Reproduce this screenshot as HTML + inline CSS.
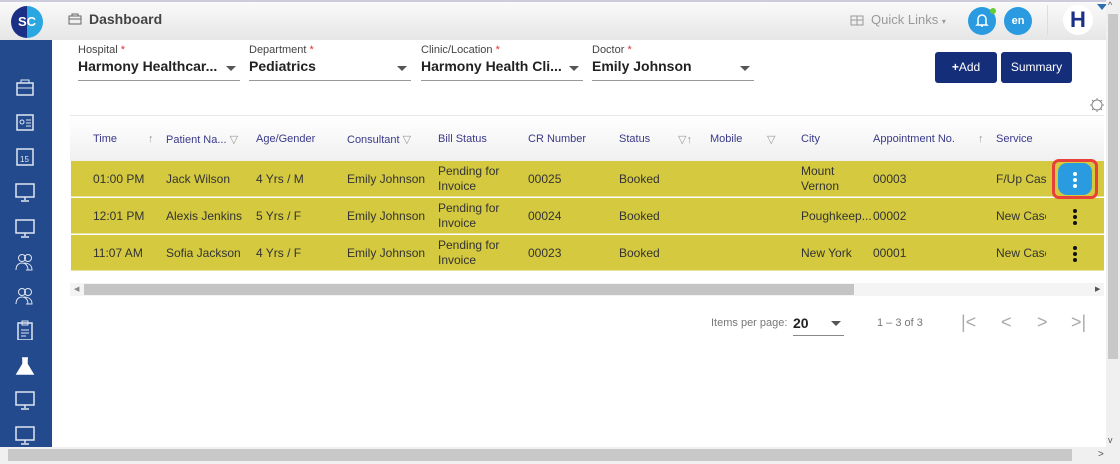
<!DOCTYPE html>
<html><head><style>
*{box-sizing:border-box;margin:0;padding:0}
body{width:1120px;height:464px;overflow:hidden;font-family:"Liberation Sans",sans-serif;background:#fff;position:relative;font-size:12px;color:#333}
.abs{position:absolute}
.hdr{left:0;top:0;width:1106px;height:40px;background:linear-gradient(#fafafa,#e6e6e6);border-top:2px solid #ccd}
.side{left:0;top:40px;width:52px;height:407px;background:#224a8c}
.ic{position:absolute;left:14px;width:22px;height:20px}
.lbl{font-size:11px;color:#444}
.lbl b{color:#d33;font-weight:normal}
.val{font-size:14px;font-weight:bold;color:#222;margin-top:2px}
.sel{position:absolute;top:44px;height:37px;border-bottom:1px solid #999}
.caret{position:absolute;right:4px;top:22px;border:5px solid transparent;border-top:5px solid #555}
.btn{position:absolute;top:52px;height:31px;background:#142e7a;color:#fff;font-size:12px;border-radius:3px;text-align:center;line-height:30px}
.th{position:absolute;top:133px;font-size:11px;color:#3a3a8a}
.row{position:absolute;left:71px;width:1033px;height:36px;background:#d4c93f;border-bottom:1px solid #e8e3a0}
.c{position:absolute;font-size:12px;color:#333;line-height:15px}
.dots{position:absolute;width:4px}
.dots i{display:block;width:4px;height:4px;border-radius:2px;background:#111;margin-bottom:2px}
</style></head><body>
<div class="abs hdr"></div>
<div class="abs" style="left:11px;top:6px;width:32px;height:32px;border-radius:50%;background:linear-gradient(90deg,#1b2f86 50%,#2aa6e0 50%);color:#fff;font-weight:bold;font-size:13px;text-align:center;line-height:32px">SC</div>
<svg class="abs" style="left:68px;top:13px" width="14" height="12"><rect x="1" y="3" width="12" height="8" fill="none" stroke="#666"/><rect x="4" y="1" width="6" height="2" fill="none" stroke="#666"/><line x1="1" y1="6" x2="13" y2="6" stroke="#666"/></svg>
<div class="abs" style="left:89px;top:11px;font-size:14px;font-weight:bold;color:#444">Dashboard</div>
<svg class="abs" style="left:850px;top:12px" width="14" height="14"><rect x="1" y="4" width="12" height="9" fill="none" stroke="#999"/><line x1="1" y1="8" x2="13" y2="8" stroke="#999"/><line x1="7" y1="4" x2="7" y2="13" stroke="#999"/></svg>
<div class="abs" style="left:871px;top:12px;font-size:13px;color:#999">Quick Links <span style="font-size:8px">▾</span></div>
<div class="abs" style="left:968px;top:7px;width:28px;height:28px;border-radius:50%;background:#2a9be0"></div>
<svg class="abs" style="left:975px;top:13px" width="14" height="16"><path d="M3 11V6a4 4 0 0 1 8 0v5l1 1H2z M6 13h2" fill="none" stroke="#fff" stroke-width="1.5"/></svg>
<div class="abs" style="left:990px;top:8px;width:6px;height:6px;border-radius:50%;background:#6c3"></div>
<div class="abs" style="left:1004px;top:7px;width:28px;height:28px;border-radius:50%;background:#2a9be0;color:#fff;font-size:11px;font-weight:bold;text-align:center;line-height:28px">en</div>
<div class="abs" style="left:1047px;top:5px;width:1px;height:30px;background:#ddd"></div>
<div class="abs" style="left:1063px;top:5px;width:30px;height:30px;border-radius:50%;background:#fff;color:#1b2f86;font-size:22px;font-weight:bold;text-align:center;line-height:30px">H</div>
<div class="abs" style="left:1097px;top:4px;border:5px solid transparent;border-top:6px solid #2a6fb0"></div>

<div class="abs side">
<svg class="ic" style="top:38px"><rect x="3" y="5" width="16" height="12" fill="none" stroke="#dfe6f2" stroke-width="1.5"/><rect x="7" y="2" width="8" height="3" fill="none" stroke="#dfe6f2"/><line x1="3" y1="10" x2="19" y2="10" stroke="#dfe6f2"/></svg>
<svg class="ic" style="top:72px"><rect x="3" y="3" width="16" height="15" fill="none" stroke="#dfe6f2" stroke-width="1.5"/><circle cx="8" cy="10" r="2" fill="none" stroke="#dfe6f2"/><path d="M12 8h5M12 11h5M12 14h5" stroke="#dfe6f2"/></svg>
<svg class="ic" style="top:106px"><rect x="3" y="3" width="16" height="16" fill="none" stroke="#dfe6f2" stroke-width="1.5"/><text x="6" y="16" font-size="8" fill="#dfe6f2" font-family="Liberation Sans">15</text></svg>
<svg class="ic" style="top:142px"><rect x="2" y="2" width="18" height="13" fill="none" stroke="#dfe6f2" stroke-width="1.5"/><path d="M11 15v3M7 19h8" stroke="#dfe6f2" stroke-width="1.5"/></svg>
<svg class="ic" style="top:178px"><rect x="2" y="2" width="18" height="13" fill="none" stroke="#dfe6f2" stroke-width="1.5"/><path d="M11 15v3M7 19h8" stroke="#dfe6f2" stroke-width="1.5"/></svg>
<svg class="ic" style="top:212px"><circle cx="8" cy="6" r="3.5" fill="none" stroke="#dfe6f2"/><circle cx="14" cy="6" r="3.5" fill="none" stroke="#dfe6f2"/><path d="M2 18c0-5 3-7 6-7s6 2 6 7M10 11c3 0 8 1 8 7h-6" fill="none" stroke="#dfe6f2"/></svg>
<svg class="ic" style="top:246px"><circle cx="8" cy="6" r="3.5" fill="none" stroke="#dfe6f2"/><circle cx="14" cy="6" r="3.5" fill="none" stroke="#dfe6f2"/><path d="M2 18c0-5 3-7 6-7s6 2 6 7M10 11c3 0 8 1 8 7h-6" fill="none" stroke="#dfe6f2"/></svg>
<svg class="ic" style="top:280px"><rect x="4" y="3" width="14" height="17" fill="none" stroke="#dfe6f2" stroke-width="1.5"/><rect x="8" y="1" width="6" height="4" fill="none" stroke="#dfe6f2"/><path d="M7 10h8M7 13h8M7 16h5" stroke="#dfe6f2"/></svg>
<svg class="ic" style="top:316px"><path d="M8 2h6M9 2v6L3 18h16L13 8V2" fill="#fff" stroke="#fff" stroke-width="1.5"/></svg>
<svg class="ic" style="top:350px"><rect x="2" y="2" width="18" height="13" fill="none" stroke="#dfe6f2" stroke-width="1.5"/><path d="M11 15v3M7 19h8" stroke="#dfe6f2" stroke-width="1.5"/></svg>
<svg class="ic" style="top:385px"><rect x="2" y="2" width="18" height="13" fill="none" stroke="#dfe6f2" stroke-width="1.5"/><path d="M11 15v3M7 19h8" stroke="#dfe6f2" stroke-width="1.5"/></svg>
</div>

<div class="sel" style="left:78px;width:162px"><div class="lbl">Hospital <b>*</b></div><div class="val">Harmony Healthcar...</div><div class="caret"></div></div>
<div class="sel" style="left:249px;width:162px"><div class="lbl">Department <b>*</b></div><div class="val">Pediatrics</div><div class="caret"></div></div>
<div class="sel" style="left:421px;width:162px"><div class="lbl">Clinic/Location <b>*</b></div><div class="val">Harmony Health Cli...</div><div class="caret"></div></div>
<div class="sel" style="left:592px;width:162px"><div class="lbl">Doctor <b>*</b></div><div class="val">Emily Johnson</div><div class="caret"></div></div>
<div class="btn" style="left:935px;width:62px"><b>+</b>Add</div>
<div class="btn" style="left:1001px;width:71px">Summary</div>
<svg class="abs" style="left:1089px;top:97px" width="16" height="16"><circle cx="8" cy="8" r="5" fill="none" stroke="#888"/><path d="M8 1v2M8 13v2M1 8h2M13 8h2M3 3l1.5 1.5M11.5 11.5L13 13M3 13l1.5-1.5M11.5 4.5L13 3" stroke="#888"/></svg>

<div class="abs" style="left:70px;top:115px;width:1034px;height:46px;background:linear-gradient(#fff,#f0f0f0);border-top:1px solid #e8e8e8"></div>
<div class="th" style="left:93px">Time</div>
<div class="th" style="left:148px;color:#999">↑</div>
<div class="th" style="left:166px">Patient Na... <span style="color:#999">▽</span></div>
<div class="th" style="left:256px">Age/Gender</div>
<div class="th" style="left:347px">Consultant <span style="color:#999">▽</span></div>
<div class="th" style="left:438px">Bill Status</div>
<div class="th" style="left:528px">CR Number</div>
<div class="th" style="left:619px">Status</div>
<div class="th" style="left:678px;color:#999">▽↑</div>
<div class="th" style="left:710px">Mobile</div>
<div class="th" style="left:767px;color:#999">▽</div>
<div class="th" style="left:801px">City</div>
<div class="th" style="left:873px">Appointment No.</div>
<div class="th" style="left:978px;color:#999">↑</div>
<div class="th" style="left:996px">Service</div>

<div class="row" style="top:161px"></div>
<div class="row" style="top:198px"></div>
<div class="row" style="top:235px"></div>

<div class="c" style="left:93px;top:172px">01:00 PM</div><div class="c" style="left:166px;top:172px">Jack Wilson</div><div class="c" style="left:256px;top:172px">4 Yrs / M</div><div class="c" style="left:347px;top:172px">Emily Johnson</div><div class="c" style="left:438px;top:164px">Pending for<br>Invoice</div><div class="c" style="left:528px;top:172px">00025</div><div class="c" style="left:619px;top:172px">Booked</div><div class="c" style="left:801px;top:164px">Mount<br>Vernon</div><div class="c" style="left:873px;top:172px">00003</div><div class="c" style="left:996px;top:172px;width:50px;overflow:hidden;white-space:nowrap">F/Up Case</div>
<div class="c" style="left:93px;top:209px">12:01 PM</div><div class="c" style="left:166px;top:209px">Alexis Jenkins</div><div class="c" style="left:256px;top:209px">5 Yrs / F</div><div class="c" style="left:347px;top:209px">Emily Johnson</div><div class="c" style="left:438px;top:201px">Pending for<br>Invoice</div><div class="c" style="left:528px;top:209px">00024</div><div class="c" style="left:619px;top:209px">Booked</div><div class="c" style="left:801px;top:209px">Poughkeep...</div><div class="c" style="left:873px;top:209px">00002</div><div class="c" style="left:996px;top:209px;width:50px;overflow:hidden;white-space:nowrap">New Case</div>
<div class="c" style="left:93px;top:246px">11:07 AM</div><div class="c" style="left:166px;top:246px">Sofia Jackson</div><div class="c" style="left:256px;top:246px">4 Yrs / F</div><div class="c" style="left:347px;top:246px">Emily Johnson</div><div class="c" style="left:438px;top:238px">Pending for<br>Invoice</div><div class="c" style="left:528px;top:246px">00023</div><div class="c" style="left:619px;top:246px">Booked</div><div class="c" style="left:801px;top:246px">New York</div><div class="c" style="left:873px;top:246px">00001</div><div class="c" style="left:996px;top:246px;width:50px;overflow:hidden;white-space:nowrap">New Case</div>

<div class="abs" style="left:1052px;top:159px;width:46px;height:40px;border:3px solid #e8413a;border-radius:7px"></div>
<div class="abs" style="left:1058px;top:163px;width:34px;height:32px;border-radius:9px;background:#2a9be0"></div>
<div class="dots" style="left:1073px;top:172px"><i style="background:#fff"></i><i style="background:#fff"></i><i style="background:#fff"></i></div>
<div class="dots" style="left:1073px;top:209px"><i></i><i></i><i></i></div>
<div class="dots" style="left:1073px;top:246px"><i></i><i></i><i></i></div>

<div class="abs" style="left:70px;top:283px;width:1034px;height:13px;background:#f4f4f4"></div>
<div class="abs" style="left:84px;top:284px;width:770px;height:11px;background:#c4c4c4"></div>
<div class="abs" style="left:74px;top:285px;font-size:7px;color:#888">◀</div>
<div class="abs" style="left:1095px;top:285px;font-size:7px;color:#555">▶</div>

<div class="abs" style="left:711px;top:317px;font-size:11px;color:#777">Items per page:</div>
<div class="abs" style="left:793px;top:315px;width:51px;height:21px;border-bottom:1px solid #888;font-size:14px;font-weight:bold;color:#222">20</div>
<div class="abs" style="left:831px;top:321px;border:5px solid transparent;border-top:5px solid #555"></div>
<div class="abs" style="left:877px;top:317px;font-size:11px;color:#777">1 – 3 of 3</div>
<div class="abs" style="left:961px;top:312px;font-size:18px;color:#aaa">|&lt;</div>
<div class="abs" style="left:1001px;top:312px;font-size:18px;color:#aaa">&lt;</div>
<div class="abs" style="left:1037px;top:312px;font-size:18px;color:#aaa">&gt;</div>
<div class="abs" style="left:1071px;top:312px;font-size:18px;color:#aaa">&gt;|</div>

<div class="abs" style="left:1106px;top:0;width:14px;height:447px;background:#f0f0f0"></div>
<div class="abs" style="left:1108px;top:14px;width:10px;height:345px;background:#c8c8c8"></div>
<div class="abs" style="left:1108px;top:0;font-size:9px;color:#555">^</div>
<div class="abs" style="left:1108px;top:435px;font-size:9px;color:#555">v</div>
<div class="abs" style="left:0;top:447px;width:1120px;height:17px;background:#f0f0f0"></div>
<div class="abs" style="left:8px;top:449px;width:1064px;height:12px;background:#c8c8c8"></div>
<div class="abs" style="left:1098px;top:449px;font-size:10px;color:#555">&gt;</div>
</body></html>
